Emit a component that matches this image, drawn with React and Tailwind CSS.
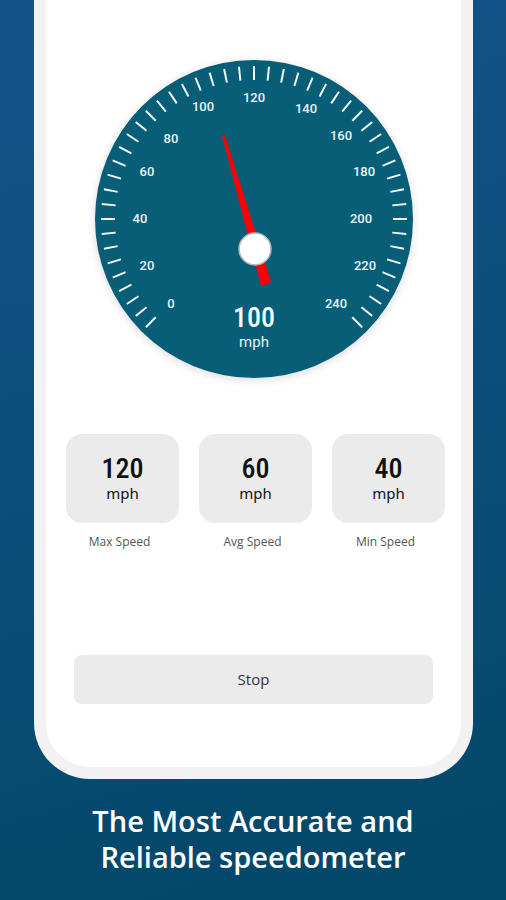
import React from "react";

const TICK_COUNT = 49;
const SWEEP = 270;

// label positions are relative to the centre of the dial
const labels = [
  [0, -83, 84],
  [20, -107, 46],
  [40, -114, -1],
  [60, -107, -48],
  [80, -83, -81],
  [100, -51, -113],
  [120, 0, -122],
  [140, 52, -111],
  [160, 87, -84],
  [180, 110, -48],
  [200, 107, -1],
  [220, 111, 46],
  [240, 82, 84],
];

const stats = [
  { label: "Max Speed", value: 120 },
  { label: "Avg Speed", value: 60 },
  { label: "Min Speed", value: 40 },
];

export default function App() {
  return (
    <div className="min-h-screen bg-linear-[165deg] from-[#135288] from-5% via-[#064b70] via-75% to-[#024768] font-['Open_Sans','Noto_Sans',sans-serif]">
      <main className="mr-[33px] ml-[34px] rounded-b-[56px] border-x-[12px] border-b-[12px] border-[#f2f2f2] bg-white pt-[49px] pb-[63px]">
        <Speedometer speed={100} />

        <section className="mt-[45px] grid grid-cols-3 gap-5 pr-4 pl-5" aria-label="Statistics">
          {stats.map((stat) => (
            <StatCard key={stat.label} {...stat} />
          ))}
        </section>

        <div className="mt-[104px] px-7">
          <button
            type="button"
            className="h-[49px] w-full rounded-lg bg-[#ebebeb] text-[15px] text-[#333]"
          >
            Stop
          </button>
        </div>
      </main>

      <h1 className="px-4 pt-6 pb-4 text-center text-[29px] leading-[36px] font-semibold text-white">
        The Most Accurate and
        <br />
        Reliable speedometer
      </h1>
    </div>
  );
}

function Speedometer({ speed }) {
  return (
    <svg
      viewBox="-170 -170 340 340"
      className="mx-auto block w-[340px] max-w-full"
      role="img"
      aria-label={`${speed} mph`}
    >
      <defs>
        <filter id="dial-shadow" x="-10%" y="-10%" width="120%" height="120%" colorInterpolationFilters="sRGB">
          <feDropShadow dx="0" dy="2" stdDeviation="4" floodColor="#000" floodOpacity="0.14" />
        </filter>
      </defs>

      <circle r="159" fill="#075e76" filter="url(#dial-shadow)" />

      <g stroke="#f1fafc" strokeWidth="2">
        {Array.from({ length: TICK_COUNT }, (_, i) => (
          <line
            key={i}
            y1="-153"
            y2="-139"
            transform={`rotate(${(i * SWEEP) / (TICK_COUNT - 1) - SWEEP / 2})`}
          />
        ))}
      </g>

      <g className="fill-[#e8f6fa] font-['Roboto',sans-serif] text-[13px] font-medium" textAnchor="middle">
        {labels.map(([value, x, y]) => (
          <text key={value} x={x} y={y + 5}>
            {value}
          </text>
        ))}
      </g>

      {/* needle and hub */}
      <path d="M-32 -83 L-29 -84 L17 63 L7 67 Z" fill="#fb0007" />
      <circle cx="1" cy="30" r="16" fill="#fff" stroke="#b4b4b4" strokeWidth="1.5" />

      <text
        y="108"
        textAnchor="middle"
        className="fill-[#f1fafc] font-['Roboto_Condensed','Roboto',sans-serif] text-[28px] font-medium"
      >
        {speed}
      </text>
      <text
        y="128"
        textAnchor="middle"
        className="fill-[#e8f6fa] font-['Roboto',sans-serif] text-[15px]"
      >
        mph
      </text>
    </svg>
  );
}

function StatCard({ label, value }) {
  return (
    <div className="text-center">
      <div className="flex h-[89px] flex-col items-center justify-center rounded-2xl bg-[#ebebeb] text-[#111]">
        <span className="font-['Roboto_Condensed','Roboto',sans-serif] text-[28px] leading-7 font-medium">
          {value}
        </span>
        <span className="font-['Noto_Sans',sans-serif] text-[15px] leading-5">mph</span>
      </div>
      <p className="mt-2.5 pr-1.5 text-[12px] leading-[18px] text-[#555]">{label}</p>
    </div>
  );
}
